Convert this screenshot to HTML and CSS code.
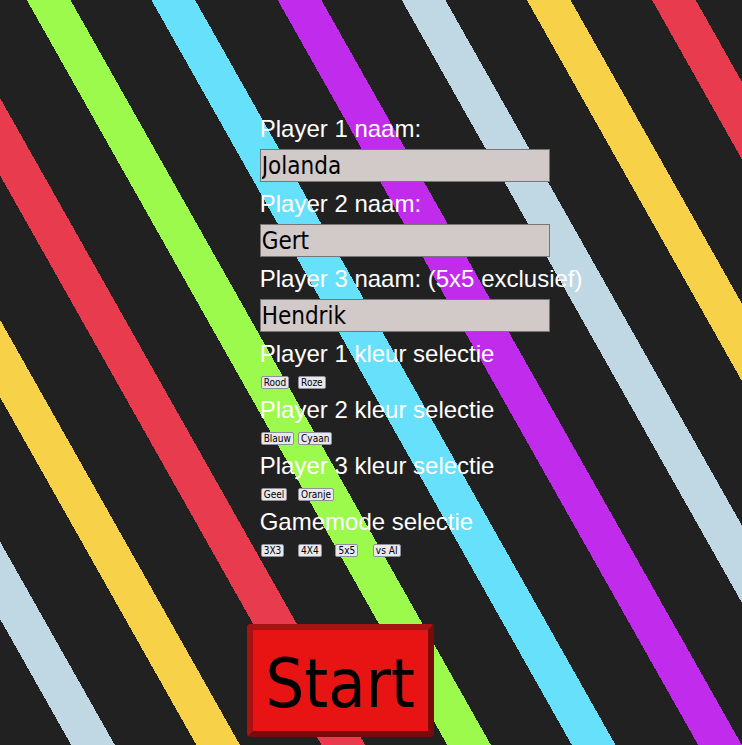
FILE: index.html
```html
<!DOCTYPE html>
<html lang="nl">
<head>
<meta charset="utf-8">
<title>Spel instellingen</title>
<link rel="stylesheet" href="styles.css">
</head>
<body>
<div class="page">
  <form class="setup">
    <label class="label" for="p1">Player 1 naam:</label>
    <input class="name" id="p1" type="text" value="Jolanda">
    <label class="label" for="p2">Player 2 naam:</label>
    <input class="name" id="p2" type="text" value="Gert">
    <label class="label" for="p3">Player 3 naam: (5x5 exclusief)</label>
    <input class="name" id="p3" type="text" value="Hendrik">

    <div class="label">Player 1 kleur selectie</div>
    <div class="choices"><button type="button" class="choice">Rood</button><button type="button" class="choice">Roze</button></div>
    <div class="label">Player 2 kleur selectie</div>
    <div class="choices"><button type="button" class="choice">Blauw</button><button type="button" class="choice">Cyaan</button></div>
    <div class="label">Player 3 kleur selectie</div>
    <div class="choices"><button type="button" class="choice">Geel</button><button type="button" class="choice">Oranje</button></div>
    <div class="label">Gamemode selectie</div>
    <div class="choices"><button type="button" class="choice">3X3</button><button type="button" class="choice">4X4</button><button type="button" class="choice">5x5</button><button type="button" class="choice">vs AI</button></div>
  </form>
  <div class="start-row">
    <button type="button" class="start">Start</button>
  </div>
</div>
</body>
</html>
```
FILE: styles.css
```css
html, body {
  margin: 0;
  padding: 0;
  height: 100%;
}

body {
  background: #212121;
}

.page {
  width: 100%;
  height: 100vh;
  overflow: hidden;
  display: flex;
  flex-direction: column;
  background: repeating-linear-gradient(60.56deg,
    #212121 0px, #212121 62px,
    #c0d7e4 62px, #c0d7e4 100px,
    #212121 100px, #212121 171px,
    #f7d148 171px, #f7d148 209px,
    #212121 209px, #212121 280px,
    #e83c4e 280px, #e83c4e 318px,
    #212121 318px, #212121 389.5px,
    #9bfa4b 389.5px, #9bfa4b 427.5px,
    #212121 427.5px, #212121 498px,
    #66e0fb 498px, #66e0fb 536px,
    #212121 536px, #212121 608px,
    #c12beb 608px, #c12beb 646px,
    #212121 646px, #212121 654px);
}

.setup {
  display: flex;
  flex-direction: column;
  align-items: flex-start;
  margin: 0;
  padding: 115px 0 0 35%;
}

.label {
  font-family: "Liberation Sans", Arial, sans-serif;
  font-size: 24px;
  line-height: 28px;
  color: #ffffff;
  white-space: nowrap;
}

.name {
  box-sizing: border-box;
  width: 290px;
  height: 33px;
  margin: 6px 0 8px;
  padding: 0 1px;
  border: 1px solid #76767a;
  border-radius: 0;
  background: #d2c9c9;
  color: #000000;
  font-family: "DejaVu Sans Condensed", "DejaVu Sans", sans-serif;
  font-stretch: condensed;
  font-size: 24px;
  outline: none;
}

.choices {
  display: grid;
  grid-template-columns: repeat(4, 37.4px);
  justify-items: start;
  margin: 8px 0 7px 1px;
  height: 13px;
}

.choice {
  box-sizing: border-box;
  height: 13px;
  margin: 0;
  padding: 0 2px;
  border: 1px solid #8f8f9d;
  border-radius: 2px;
  background: #e9e9ed;
  color: #000000;
  font-family: "DejaVu Sans Condensed", "DejaVu Sans", sans-serif;
  font-stretch: condensed;
  font-size: 10px;
  line-height: 11px;
  white-space: nowrap;
}

.start-row {
  display: flex;
  padding-left: 33.25%;
  margin-top: 60px;
}

.start {
  box-sizing: border-box;
  width: 187px;
  height: 113px;
  margin: 0;
  padding: 14px 0 8px;
  border-style: solid;
  border-width: 6px;
  border-color: #a81212 #780a0a #780a0a #a81212;
  border-radius: 4px;
  background: #e81414;
  color: #000000;
  font-family: "DejaVu Sans Condensed", "DejaVu Sans", sans-serif;
  font-stretch: condensed;
  font-size: 68px;
  line-height: 79px;
  text-align: center;
}
```
